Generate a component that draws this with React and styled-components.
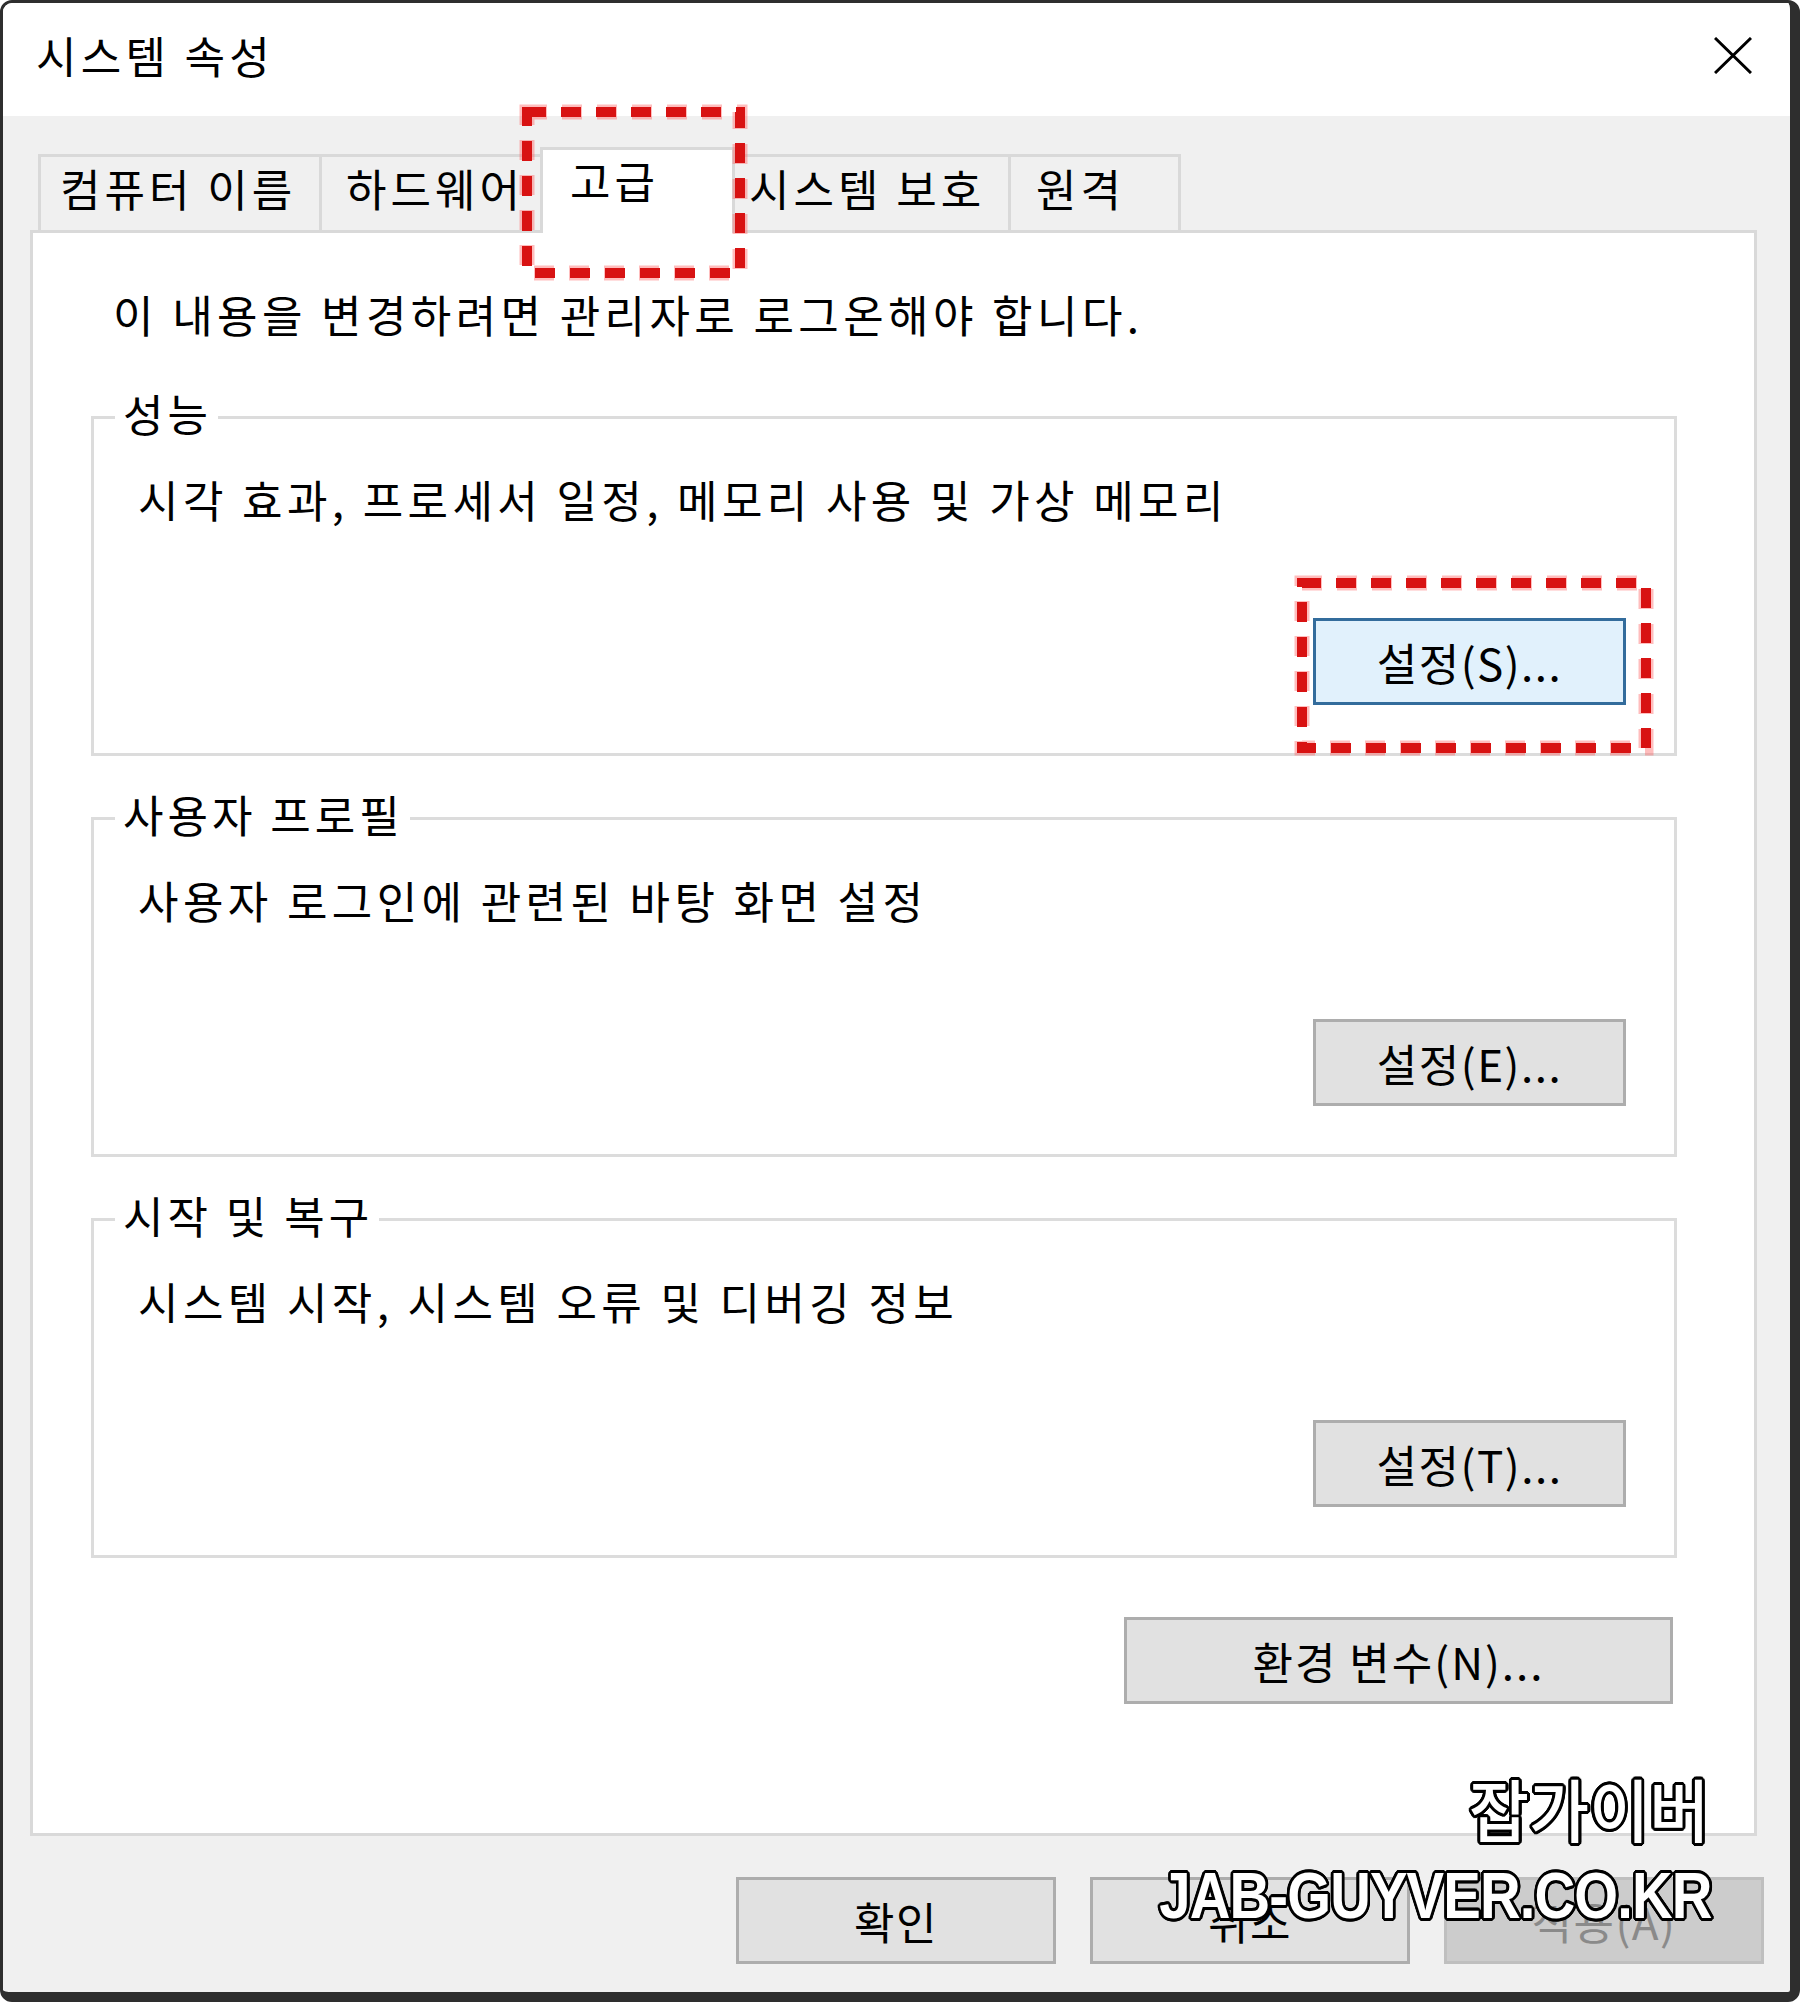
import React from "react";
import styled, { createGlobalStyle } from "styled-components";

const GlobalStyle = createGlobalStyle`
  html, body {
    margin: 0;
    padding: 0;
    background: #ffffff;
  }
  body {
    font-family: "Noto Sans CJK KR", "Noto Sans", sans-serif;
    color: #000000;
  }
  * {
    box-sizing: border-box;
  }
`;

const Window = styled.div`
  position: relative;
  width: 1800px;
  height: 2002px;
  border-style: solid;
  border-color: #2e2e2e;
  border-width: 3px 10px 10px 3px;
  border-radius: 12px;
  overflow: hidden;
  background: #f0f0f0;
  display: flex;
  flex-direction: column;
`;

const TitleBar = styled.div`
  height: 113px;
  background: #ffffff;
  display: flex;
  justify-content: space-between;
  align-items: flex-start;
  padding: 27px 0 0 33px;
`;

const Title = styled.div`
  font-size: 44px;
  line-height: 50px;
  letter-spacing: 4.3px;
`;

const CloseIcon = styled.svg`
  width: 38px;
  height: 37px;
  margin: 7px 38px 0 0;
`;

const Body = styled.div`
  padding: 38px 33px 0 27px;
`;

const TabRow = styled.div`
  display: flex;
  align-items: flex-end;
  height: 76px;
  padding-left: 8px;
`;

const Tab = styled.div`
  position: relative;
  width: ${(p) => p.$width}px;
  height: ${(p) => (p.$active ? 86 : 76)}px;
  margin-right: -3px;
  margin-bottom: ${(p) => (p.$active ? -3 : 0)}px;
  z-index: ${(p) => (p.$active ? 2 : 1)};
  border: 3px solid #d9d9d9;
  border-bottom: none;
  background: ${(p) => (p.$active ? "#ffffff" : "#f0f0f0")};
  padding: ${(p) => (p.$active ? 5 : 6)}px 0 0 ${(p) => p.$indent}px;
  font-size: 44px;
  line-height: 50px;
  letter-spacing: 4px;
  white-space: nowrap;
  overflow: hidden;
`;

const Panel = styled.div`
  height: 1606px;
  border: 3px solid #d9d9d9;
  background: #ffffff;
  padding: 56px 77px 0 58px;
  display: flex;
  flex-direction: column;
`;

const Notice = styled.div`
  margin-left: 22px;
  font-size: 44px;
  line-height: 50px;
  letter-spacing: 4.4px;
  white-space: nowrap;
`;

const GroupBox = styled.div`
  margin-top: ${(p) => p.$gap}px;
  height: 340px;
  border: 3px solid #dcdcdc;
  display: flex;
  flex-direction: column;
  padding: 0 48px 0 44px;
`;

const Legend = styled.div`
  align-self: flex-start;
  margin: -31px 0 0 -23px;
  padding: 0 6px 0 8px;
  background: #ffffff;
  font-size: 44px;
  line-height: 50px;
  letter-spacing: 4px;
  white-space: nowrap;
`;

const Description = styled.div`
  margin-top: 36px;
  font-size: 44px;
  line-height: 50px;
  letter-spacing: 4.4px;
  white-space: nowrap;
`;

const Button = styled.div`
  width: ${(p) => p.$width}px;
  height: 87px;
  display: flex;
  align-items: center;
  justify-content: center;
  border: 3px solid ${(p) => (p.$focused ? "#336c9c" : p.$disabled ? "#bfbfbf" : "#adadad")};
  background: ${(p) => (p.$focused ? "#e1f1fc" : p.$disabled ? "#cccccc" : "#e1e1e1")};
  color: ${(p) => (p.$disabled ? "#8a8a8a" : "#000000")};
  font-size: 44px;
  letter-spacing: 1.5px;
  white-space: nowrap;
`;

const GroupButton = styled(Button)`
  align-self: flex-end;
  margin-top: 94px;
`;

const EnvButton = styled(Button)`
  align-self: flex-end;
  margin: 59px 4px 0 0;
  letter-spacing: 2px;
`;

const Footer = styled.div`
  display: flex;
  justify-content: flex-end;
  gap: 34px;
  margin-top: 41px;
  padding-right: 26px;
`;

const Mark = styled.svg`
  position: absolute;
  left: ${(p) => p.$x - 11}px;
  top: ${(p) => p.$y - 11}px;
  width: ${(p) => p.$w + 22}px;
  height: ${(p) => p.$h + 22}px;
  z-index: 5;
  pointer-events: none;
`;

const Watermark = styled.div`
  position: absolute;
  right: 78px;
  top: 1771px;
  z-index: 6;
  display: flex;
  flex-direction: column;
  align-items: flex-end;
  color: #ffffff;
  text-shadow:
    3px 0 0 #000, -3px 0 0 #000, 0 3px 0 #000, 0 -3px 0 #000,
    2px 2px 0 #000, -2px 2px 0 #000, 2px -2px 0 #000, -2px -2px 0 #000,
    3px 1px 0 #000, -3px 1px 0 #000, 3px -1px 0 #000, -3px -1px 0 #000,
    1px 3px 0 #000, -1px 3px 0 #000, 1px -3px 0 #000, -1px -3px 0 #000;
`;

const MarkKo = styled.span`
  display: block;
  margin-right: 3px;
  font-family: "Noto Sans CJK KR", sans-serif;
  font-weight: 500;
  font-size: 68px;
  line-height: 68px;
  transform: scaleX(0.96);
  transform-origin: right center;
`;

const MarkEn = styled.span`
  display: block;
  margin-top: 22px;
  font-family: "Liberation Sans", Arial, sans-serif;
  font-weight: 700;
  font-size: 64px;
  line-height: 64px;
  letter-spacing: -1px;
  transform: scaleX(0.88);
  transform-origin: right center;
`;

const tabs = [
  { label: "컴퓨터 이름", width: 284, indent: 19 },
  { label: "하드웨어", width: 224, indent: 24 },
  { label: "고급", width: 195, indent: 27, active: true },
  { label: "시스템 보호", width: 279, indent: 14 },
  { label: "원격", width: 173, indent: 25 },
];

const groups = [
  {
    title: "성능",
    text: "시각 효과, 프로세서 일정, 메모리 사용 및 가상 메모리",
    button: "설정(S)...",
    focused: true,
    gap: 77,
  },
  {
    title: "사용자 프로필",
    text: "사용자 로그인에 관련된 바탕 화면 설정",
    button: "설정(E)...",
    gap: 61,
  },
  {
    title: "시작 및 복구",
    text: "시스템 시작, 시스템 오류 및 디버깅 정보",
    button: "설정(T)...",
    gap: 61,
  },
];

const DashBox = ({ x, y, w, h }) => (
  <Mark $x={x} $y={y} $w={w} $h={h} viewBox={`0 0 ${w + 22} ${h + 22}`}>
    <rect
      x="11"
      y="11"
      width={w}
      height={h}
      fill="none"
      stroke="rgba(255, 90, 90, 0.4)"
      strokeWidth="15"
      strokeDasharray="20 15"
    />
    <rect
      x="11"
      y="11"
      width={w}
      height={h}
      fill="none"
      stroke="#d81212"
      strokeWidth="10"
      strokeDasharray="20 15"
      strokeDashoffset="1"
    />
  </Mark>
);

export default function App() {
  return (
    <>
      <GlobalStyle />
      <Window>
        <TitleBar>
          <Title>시스템 속성</Title>
          <CloseIcon viewBox="0 0 38 37">
            <path d="M1 1 L37 36 M37 1 L1 36" stroke="#000" strokeWidth="3" fill="none" />
          </CloseIcon>
        </TitleBar>

        <Body>
          <TabRow>
            {tabs.map((t) => (
              <Tab key={t.label} $width={t.width} $indent={t.indent} $active={t.active}>
                {t.label}
              </Tab>
            ))}
          </TabRow>

          <Panel>
            <Notice>이 내용을 변경하려면 관리자로 로그온해야 합니다.</Notice>
            {groups.map((g) => (
              <GroupBox key={g.title} $gap={g.gap}>
                <Legend>{g.title}</Legend>
                <Description>{g.text}</Description>
                <GroupButton $width={313} $focused={g.focused}>
                  {g.button}
                </GroupButton>
              </GroupBox>
            ))}
            <EnvButton $width={549}>환경 변수(N)...</EnvButton>
          </Panel>
        </Body>

        <Footer>
          <Button $width={320}>확인</Button>
          <Button $width={320}>취소</Button>
          <Button $width={320} $disabled>
            적용(A)
          </Button>
        </Footer>

        <DashBox x={524} y={109} w={213} h={161} />
        <DashBox x={1299} y={580} w={344} h={165} />

        <Watermark>
          <MarkKo>잡가이버</MarkKo>
          <MarkEn>JAB-GUYVER.CO.KR</MarkEn>
        </Watermark>
      </Window>
    </>
  );
}
